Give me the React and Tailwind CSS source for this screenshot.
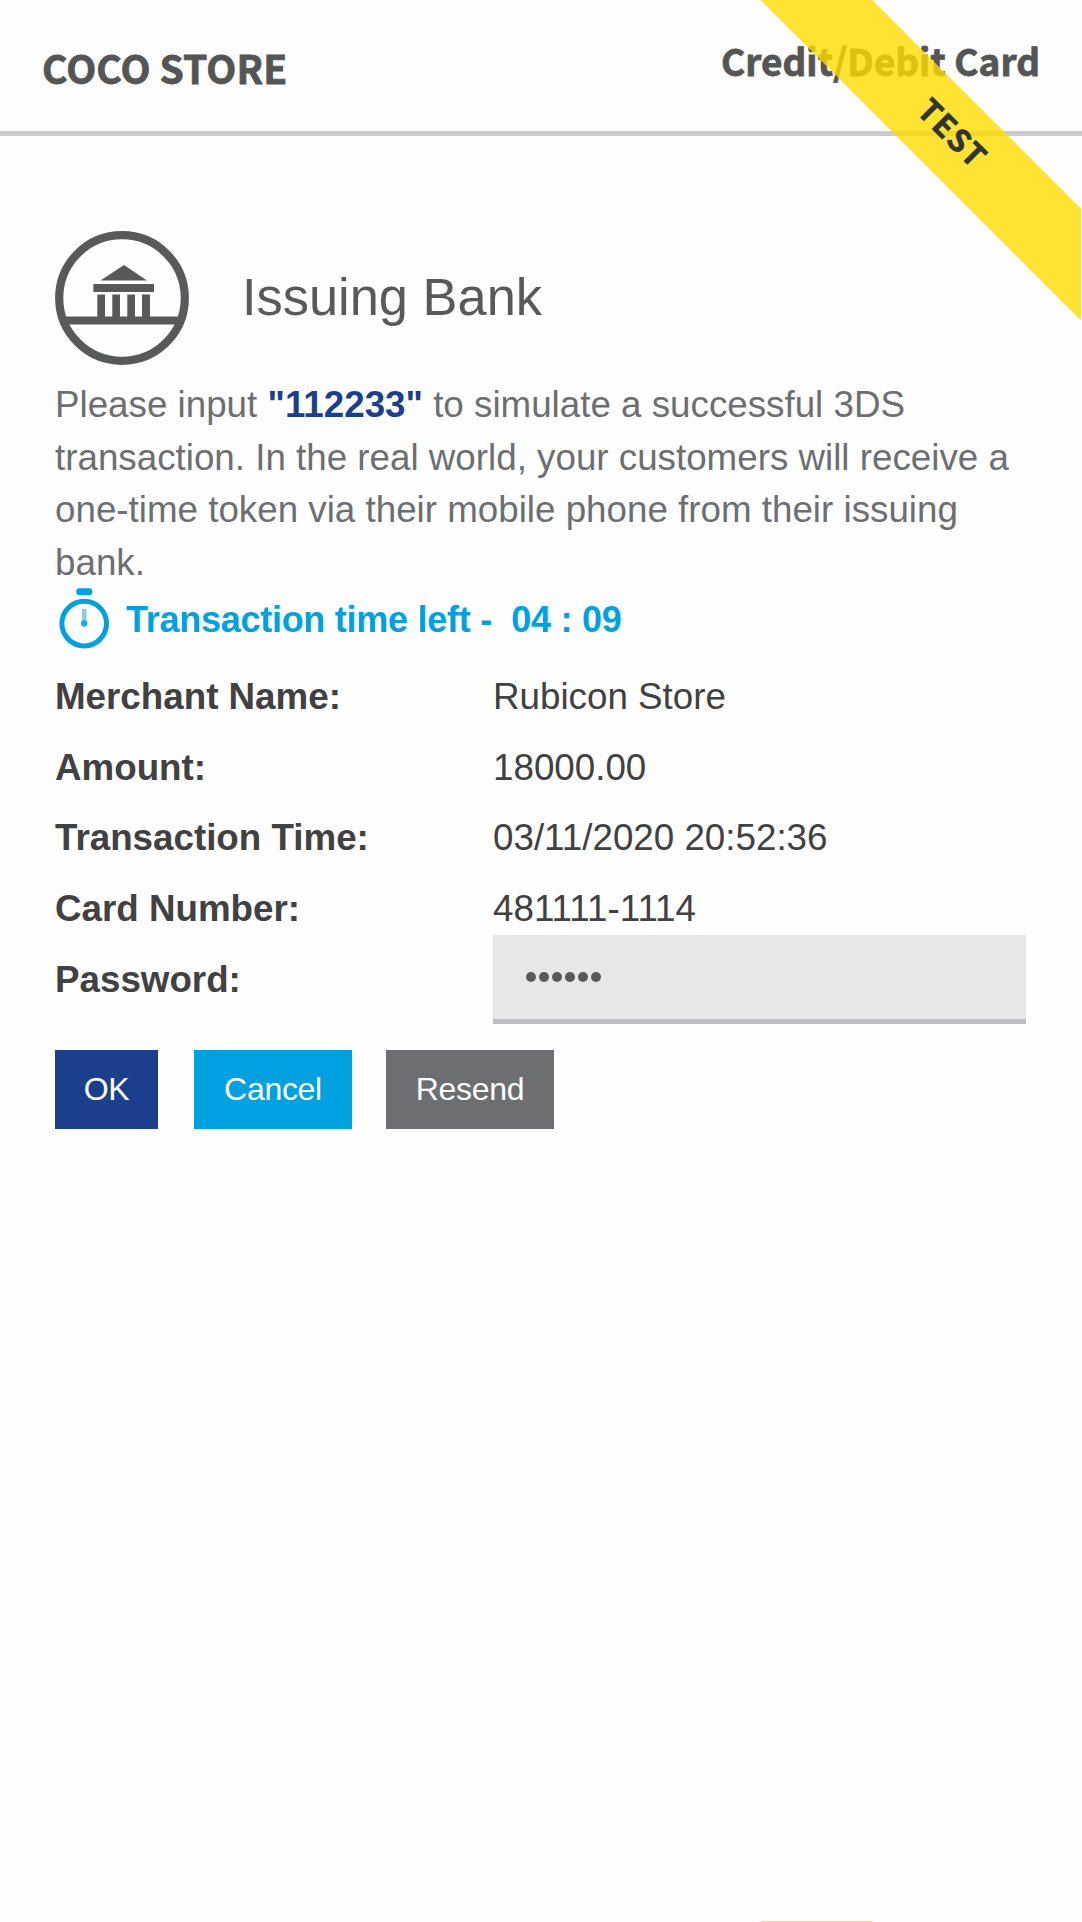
const rows = [
  ["Merchant Name:", "Rubicon Store"],
  ["Amount:", "18000.00"],
  ["Transaction Time:", "03/11/2020 20:52:36"],
  ["Card Number:", "481111-1114"],
];

function BankIcon() {
  return (
    <svg className="h-[134px] w-[134px] shrink-0" viewBox="0 0 134 134" fill="#58595b">
      <circle cx="67" cy="67" r="62.800" fill="none" stroke="#58595b" strokeWidth="8.200" />
      <path d="M69 34 92 49.500H45.500z" />
      <path d="M38.300 53H99v8H38.300zM42.300 63.500H50V87h-7.700zM57.300 63.500H65V87h-7.700zM72.300 63.500H80V87h-7.700zM87 63.500h8V87h-8zM8 85.500h118v8H8z" />
    </svg>
  );
}

function TimerIcon() {
  return (
    <svg className="h-[62px] w-[54px] shrink-0" viewBox="0 0 54 62" fill="none">
      <circle cx="29.200" cy="35.600" r="22.300" stroke="#00a1e1" strokeWidth="5" />
      <rect x="21.300" y="0.300" width="16" height="7" rx="3" fill="#00a1e1" />
      <path d="M29.200 21v14" stroke="#85cdf0" strokeWidth="4.600" />
      <circle cx="29.200" cy="35.500" r="3.200" fill="#1fabe4" />
    </svg>
  );
}

export default function App() {
  return (
    <div className="relative h-[1922px] w-[1082px] overflow-hidden bg-[#fefefe] font-['Liberation_Sans',sans-serif] text-[36.75px] leading-[52.6px] text-[#414042]">
      <header className="flex h-[136px] items-start justify-between border-b-[5px] border-[#cccccc] pr-[42px] pl-[42px] font-['Noto_Sans_CJK_SC',sans-serif] font-bold text-[#555555] [-webkit-text-stroke:0.8px_#555555]">
        <h1 className="pt-[40px] text-[39px] leading-[54px] tracking-[0.1px]">COCO STORE</h1>
        <p className="pt-[33px] text-[37px] leading-[54px]">Credit/Debit Card</p>
      </header>

      <main className="px-[55px] pt-[95px]">
        <div className="flex items-center gap-[53px]">
          <BankIcon />
          <h2 className="pb-[2px] text-[52.4px] leading-[60px] text-[#58595b]">Issuing Bank</h2>
        </div>

        <p className="mt-[14px] text-[#6d6e71]">
          Please input <b className="text-[#1b3f8c]">"112233"</b> to simulate a successful 3DS transaction. In the real
          world, your customers will receive a one-time token via their mobile phone from their issuing bank.
        </p>

        <div className="-mt-px flex items-center text-[36px] font-bold tracking-[-0.27px] whitespace-pre text-[#00a1e1]">
          <TimerIcon />
          <span className="ml-[17px] pt-[2px]">{"Transaction time left -  04 : 09"}</span>
        </div>

        <div className="mt-[20.5px] grid grid-cols-[438px_533px] auto-rows-[70.7px]">
          {rows.map(([label, value]) => (
            <div key={label} className="contents">
              <b>{label}</b>
              <span>{value}</span>
            </div>
          ))}
          <b>Password:</b>
          <div className="-mt-[19px] flex h-[89px] w-[533px] items-center border-b-[5px] border-[#bcbdc0] bg-[#e6e7e8] pt-px pl-[33px]">
            <div className="flex gap-[3px]">
              {[0, 1, 2, 3, 4, 5].map((dot) => (
                <i key={dot} className="size-[10px] rounded-full bg-[#58595b]" />
              ))}
            </div>
          </div>
        </div>

        <div className="mt-[25.6px] flex text-[32px] tracking-[-0.3px] text-white">
          <button className="h-[79px] w-[103px] bg-[#1b3f8c]">OK</button>
          <button className="ml-[36px] h-[79px] w-[158px] bg-[#00a1e1]">Cancel</button>
          <button className="ml-[34px] h-[79px] w-[168px] bg-[#6d6e71]">Resend</button>
        </div>
      </main>

      <div className="absolute top-0 right-px size-[321px] overflow-hidden">
        <div className="absolute top-[96.25px] left-[-108px] flex h-[78.5px] w-[600px] rotate-45 items-center justify-center bg-[#ffdc00]/80 pr-[2px] pb-[6px] font-['Noto_Sans_CJK_SC',sans-serif] text-[31px] leading-[40px] font-bold tracking-[1.5px] text-[#333333] [-webkit-text-stroke:0.6px_#333333]">
          TEST
        </div>
      </div>
      <div className="absolute bottom-0 left-[761px] h-px w-[111px] bg-[#fbe04a]" />
    </div>
  );
}
